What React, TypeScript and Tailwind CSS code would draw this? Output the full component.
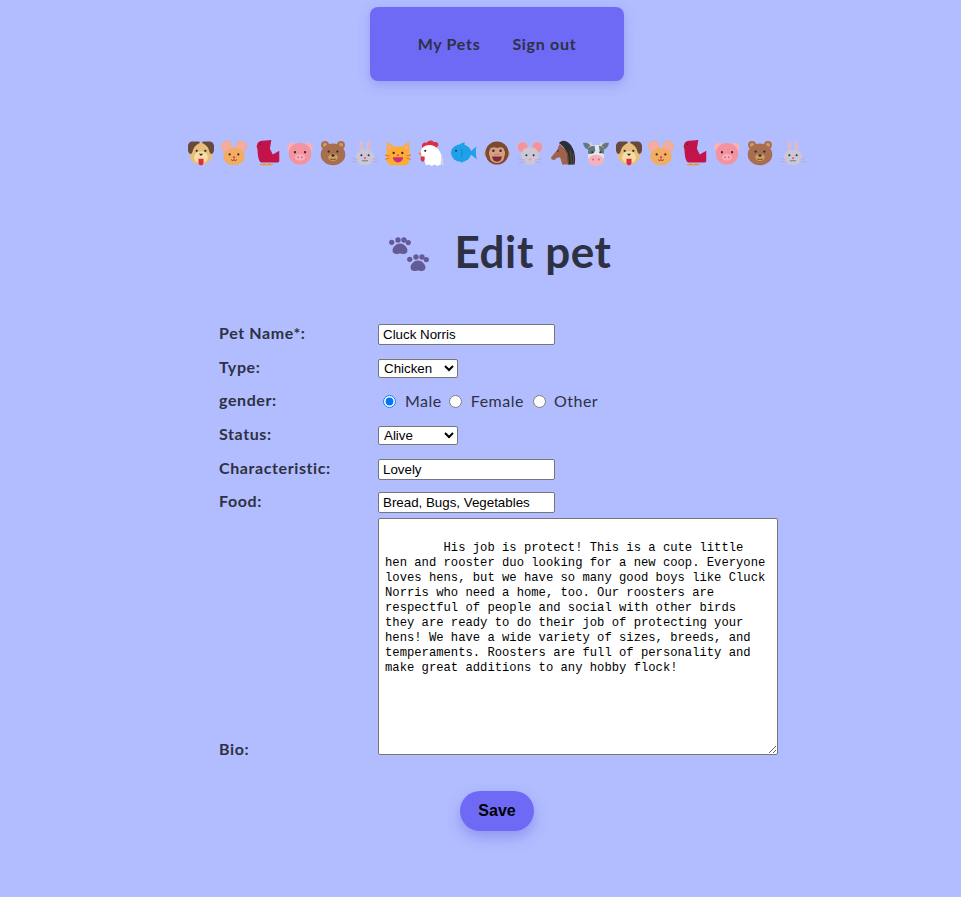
const Dog = () => (
  <svg viewBox="0 0 36 36" className="w-[26px] h-[26px]">
    <ellipse cx="18" cy="19" rx="16" ry="15" fill="#E8BE7C" />
    <path d="M6 2h8c3 0 3 2 1 3-4 2-7 5-8 9-1 4-2 6-4 5-2-1-3-3-3-6V8c0-3 3-6 6-6z" fill="#69493A" />
    <path d="M30 2h-8c-3 0-3 2-1 3 4 2 7 5 8 9 1 4 2 6 4 5 2-1 3-3 3-6V8c0-3-3-6-6-6z" fill="#69493A" />
    <ellipse cx="18" cy="24" rx="9.5" ry="8.500" fill="#F7DEA5" />
    <circle cx="12" cy="15" r="1.6" fill="#292F33" />
    <circle cx="24" cy="15" r="1.6" fill="#292F33" />
    <path d="M15 19h6l-3 3z" fill="#292F33" />
    <path d="M14.500 26h7v5c0 3-2 4-3.500 4s-3.500-1-3.500-4z" fill="#DD2E44" />
  </svg>
);

const Hamster = () => (
  <svg viewBox="0 0 36 36" className="w-[26px] h-[26px]">
    <circle cx="8" cy="9" r="7.5" fill="#F4ABA0" stroke="#F4AC60" strokeWidth="1" />
    <circle cx="28" cy="9" r="7.5" fill="#F4ABA0" stroke="#F4AC60" strokeWidth="1" />
    <ellipse cx="18" cy="23" rx="15" ry="12" fill="#F4AC60" />
    <circle cx="12" cy="20" r="1.5" fill="#292F33" />
    <circle cx="24" cy="20" r="1.5" fill="#292F33" />
    <circle cx="18" cy="24" r="1.500" fill="#DD2E6E" />
    <path d="M14 27c2 2 3 2 4 0 1 2 2 2 4 0" fill="none" stroke="#292F33" strokeWidth="1" />
  </svg>
);

const Bird = () => (
  <svg viewBox="0 0 36 36" className="w-[26px] h-[26px]">
    <path d="M5 7l-3 2.500 4 1.500z" fill="#F4900C" />
    <path d="M4 9C4 3 8 1 12 1l12-1-2 12 4 8 9-5v14c0 1-1 2-2 2H10C7 31 5 22 5 15z" fill="#C2134B" />
    <circle cx="9" cy="6" r="1" fill="#292F33" />
    <path d="M13 31h2v2.500h4V35H8v-1.500h5zM20 31h2v2.500h4V35h-7z" fill="#F4900C" />
  </svg>
);

const Pig = () => (
  <svg viewBox="0 0 36 36" className="w-[26px] h-[26px]">
    <path d="M10 4C5 3 0 6 0 10c0 3 3 6 6 6z" fill="#F7B1BC" />
    <path d="M26 4c5-1 10 2 10 6 0 3-3 6-6 6z" fill="#F7B1BC" />
    <ellipse cx="18" cy="19" rx="15.5" ry="15" fill="#F4929E" />
    <circle cx="11" cy="17" r="1.6" fill="#292F33" />
    <circle cx="25" cy="17" r="1.6" fill="#292F33" />
    <ellipse cx="18" cy="24" rx="7" ry="4.5" fill="#F7B1BC" />
    <ellipse cx="15.5" cy="24" rx="1.2" ry="1.5" fill="#D9657A" />
    <ellipse cx="20.5" cy="24" rx="1.2" ry="1.5" fill="#D9657A" />
  </svg>
);

const Bear = () => (
  <svg viewBox="0 0 36 36" className="w-[26px] h-[26px]">
    <circle cx="7" cy="7" r="5.500" fill="#A86E50" />
    <circle cx="29" cy="7" r="5.500" fill="#A86E50" />
    <circle cx="7" cy="7" r="2.800" fill="#D99E5C" />
    <circle cx="29" cy="7" r="2.800" fill="#D99E5C" />
    <ellipse cx="18" cy="20" rx="17" ry="15" fill="#A86E50" />
    <circle cx="12" cy="16" r="1.6" fill="#292F33" />
    <circle cx="24" cy="16" r="1.6" fill="#292F33" />
    <ellipse cx="18" cy="24" rx="6.500" ry="5" fill="#D99E5C" />
    <ellipse cx="18" cy="21.500" rx="2.500" ry="1.600" fill="#292F33" />
    <path d="M14 26c2 1.500 3 1.500 4 0 1 1.500 2 1.500 4 0" fill="none" stroke="#292F33" strokeWidth="1" />
  </svg>
);

const Rabbit = () => (
  <svg viewBox="0 0 36 36" className="w-[26px] h-[26px]">
    <ellipse cx="13" cy="8" rx="2.500" ry="7" fill="#CCC6D6" />
    <ellipse cx="23" cy="8" rx="2.500" ry="7" fill="#CCC6D6" />
    <ellipse cx="13" cy="8" rx="1.200" ry="5.500" fill="#F4ABBA" />
    <ellipse cx="23" cy="8" rx="1.200" ry="5.500" fill="#F4ABBA" />
    <ellipse cx="18" cy="24" rx="13" ry="11" fill="#CCC6D6" />
    <circle cx="13" cy="21" r="1.400" fill="#292F33" />
    <circle cx="23" cy="21" r="1.400" fill="#292F33" />
    <circle cx="18" cy="25" r="1.200" fill="#DD2E6E" />
    <path d="M14 28c2 2 3 1 4 0 1 1 2 2 4 0" fill="none" stroke="#292F33" strokeWidth="0.800" />
    <path d="M0 25l8 2M0 30h8M35 25l-7 2M36 30h-8" fill="none" stroke="#A5A2B2" strokeWidth="0.700" />
  </svg>
);

const Cat = () => (
  <svg viewBox="0 0 36 36" className="w-[26px] h-[26px]">
    <path d="M3 2l9 7h12l9-7 1 13v12c0 4-3 8-7 8H9c-4 0-7-4-7-8V15z" fill="#FFAC33" />
    <path d="M5 7l4 4-4 3zM31 7l-4 4 4 3z" fill="#F4ABBA" />
    <circle cx="12" cy="18" r="1.6" fill="#292F33" />
    <circle cx="24" cy="18" r="1.6" fill="#292F33" />
    <circle cx="18" cy="21" r="1.2" fill="#DD2E6E" />
    <path d="M11 24h14c0 4-3 7-7 7s-7-3-7-7z" fill="#C92F7E" />
    <path d="M0 21l6 1M0 27l6-2M36 21l-6 1M36 27l-6-2" fill="none" stroke="#E8590C" strokeWidth="1" />
  </svg>
);

const Chicken = () => (
  <svg viewBox="0 0 36 36" className="w-[26px] h-[26px]">
    <path d="M6 11C4 6 8 2 12 4c1-3 8-5 10-1 4-1 7 1 6 5l-6 6z" fill="#DD2E44" />
    <path d="M4 16l-4 3 5 3z" fill="#F4900C" />
    <path d="M4 17c0-6 5-10 12-10 9 0 15 8 17 16 1 4 2 8 2 12l-4-1-4 2-4-2-4 2-4-2-4 1-3-9C5 23 4 20 4 17z" fill="#FFFFFF" />
    <path d="M4 23c-1 4 0 7 2.500 7S10 27 9 23z" fill="#DD2E44" />
    <circle cx="10" cy="15" r="1.500" fill="#292F33" />
    <path d="M32 21c2 5 3 10 3 14l-4-1c1-4 1-9 1-13z" fill="#CCD6DD" />
  </svg>
);

const Fish = () => (
  <svg viewBox="0 0 36 36" className="w-[26px] h-[26px]">
    <path d="M8 10c3-4 6-6 11-7l-1 7z" fill="#1EA0EA" />
    <ellipse cx="14" cy="18" rx="14" ry="12" fill="#1EA0EA" />
    <path d="M25 18l10-9c-1 6-1 13 1 18z" fill="#1EA0EA" />
    <path d="M9 27l7 5 2-5z" fill="#1EA0EA" />
    <circle cx="7" cy="15" r="1.400" fill="#292F33" />
    <path d="M14 12c2 4 2 9 0 12" fill="none" stroke="#1680C4" strokeWidth="1.200" />
  </svg>
);

const Monkey = () => (
  <svg viewBox="0 0 36 36" className="w-[26px] h-[26px]">
    <circle cx="32" cy="19" r="4" fill="#D99E82" />
    <circle cx="4" cy="19" r="4" fill="#D99E82" />
    <circle cx="18" cy="18" r="16" fill="#7C4A2D" />
    <path d="M8 14c0-4 5-5 10-3 5-2 10-1 10 3 2 4 1 7 0 9 0 6-5 9-10 9S8 29 8 23c-1-2-2-5 0-9z" fill="#D99E82" />
    <circle cx="13" cy="15" r="1.700" fill="#292F33" />
    <circle cx="23" cy="15" r="1.700" fill="#292F33" />
    <path d="M16 20h1M19 20h1" stroke="#7C4A2D" strokeWidth="1.200" />
    <path d="M11 23h14c-1 5-3 7-7 7s-6-2-7-7z" fill="#7C2A3C" />
  </svg>
);

const Mouse = () => (
  <svg viewBox="0 0 36 36" className="w-[26px] h-[26px]">
    <circle cx="8" cy="10" r="7.500" fill="#F4929E" stroke="#CCC6D6" strokeWidth="0.800" />
    <circle cx="28" cy="10" r="7.500" fill="#F4929E" stroke="#CCC6D6" strokeWidth="0.800" />
    <path d="M18 34c-7 0-12-6-12-13 0-7 5-11 12-11s12 4 12 11c0 7-5 13-12 13z" fill="#CCC6D6" />
    <circle cx="13" cy="21" r="1.400" fill="#292F33" />
    <circle cx="23" cy="21" r="1.400" fill="#292F33" />
    <ellipse cx="18" cy="27" rx="2" ry="1.500" fill="#F4929E" />
    <path d="M2 26l9 2M2 32l9-2M34 26l-9 2M34 32l-9-2" fill="none" stroke="#A5A2B2" strokeWidth="0.700" />
  </svg>
);

const Horse = () => (
  <svg viewBox="0 0 36 36" className="w-[26px] h-[26px]">
    <path d="M3 27c-2-1-2-3 0-5l7-8 3-8 4 3 10 8 2 17H17l-3-10-5 1c-2 3-4 3-6 2z" fill="#A0624A" />
    <path d="M13 3l5-2c8 0 14 8 16 18 1 6 1 11 0 15h-9l-1-14c-2-7-6-12-11-15z" fill="#292F33" />
    <path d="M24 17l2 17M28 14l2 20M32 18l1 16" stroke="#7A5240" strokeWidth="1" />
    <circle cx="11" cy="15" r="1.200" fill="#292F33" />
  </svg>
);

const Cow = () => (
  <svg viewBox="0 0 36 36" className="w-[26px] h-[26px]">
    <path d="M10 1l3 6h10l3-6 1 8H9z" fill="#DDD3BE" />
    <path d="M0 4c5-1 9 1 11 5l-3 4C4 13 1 9 0 4zM36 4c-5-1-9 1-11 5l3 4c4 0 7-4 8-9z" fill="#66757F" />
    <path d="M7 12c0-3 5-5 11-5s11 2 11 5v14H7z" fill="#E1E8ED" />
    <path d="M7 11c2-2 6-3 9-3l1 7c-2 4-6 5-10 4z" fill="#66757F" />
    <path d="M29 11c-2-2-5-3-7-3l1 7c1 3 3 4 6 4z" fill="#66757F" />
    <circle cx="13" cy="17" r="1.500" fill="#292F33" />
    <circle cx="24" cy="17" r="1.500" fill="#292F33" />
    <ellipse cx="18" cy="28" rx="11" ry="7.500" fill="#F7B1BC" />
    <ellipse cx="14" cy="27" rx="1.300" ry="1.500" fill="#C96A7C" />
    <ellipse cx="22" cy="27" rx="1.300" ry="1.500" fill="#C96A7C" />
  </svg>
);

const Paws = () => (
  <svg viewBox="0 0 42 38" className="w-[42px] h-[38px] mt-[6px]" fill="#635A96">
    <circle cx="4.700" cy="6.300" r="2.600" />
    <circle cx="11" cy="4" r="2.700" />
    <circle cx="17" cy="4" r="2.700" />
    <circle cx="21.300" cy="6.600" r="2.600" />
    <path d="M13 7.500c3.500 0 7.500 3.500 7.500 7 0 2.500-2 3.500-4 3.500-1.500 0-2.500-.5-3.500-.5s-2 .5-3.500.5c-2 0-4-1-4-3.500 0-3.500 4-7 7.500-7z" />
    <circle cx="22.700" cy="23.300" r="2.600" />
    <circle cx="29" cy="21" r="2.700" />
    <circle cx="35" cy="21" r="2.700" />
    <circle cx="39.300" cy="23.600" r="2.600" />
    <path d="M31 24.500c3.500 0 7.500 3.500 7.500 7 0 2.500-2 3.500-4 3.500-1.500 0-2.500-.5-3.500-.5s-2 .5-3.500.5c-2 0-4-1-4-3.500 0-3.500 4-7 7.500-7z" />
  </svg>
);

const animals = [Dog, Hamster, Bird, Pig, Bear, Rabbit, Cat, Chicken, Fish, Monkey, Mouse, Horse, Cow, Dog, Hamster, Bird, Pig, Bear, Rabbit];

const bio =
  "\n        His job is protect! This is a cute little hen and rooster duo looking for a new coop. Everyone loves hens, but we have so many good boys like Cluck Norris who need a home, too. Our roosters are respectful of people and social with other birds they are ready to do their job of protecting your hens! We have a wide variety of sizes, breeds, and temperaments. Roosters are full of personality and make great additions to any hobby flock!";

const fieldClass =
  "border border-[#767676] rounded-[2px] bg-white text-black font-['Liberation_Sans',sans-serif] text-[13.33px]";
const labelClass = "w-[159px] pb-[4px] font-bold text-[16px] tracking-[0.6px]";

const App = () => {
  return (
    <div className="min-h-screen bg-[#B2BDFF] pl-[33px] pt-[7px] flex flex-col items-center text-[#2D3142] font-['Lato',sans-serif]">
      <nav className="w-[254px] h-[74px] rounded-lg bg-[#6F6AF6] shadow-[0_4px_12px_rgba(90,90,220,0.3)] flex items-center justify-center gap-[32px] font-bold text-[16px] tracking-[0.7px]">
        <span>My Pets</span>
        <span>Sign out</span>
      </nav>

      <div className="mt-[55px] h-[33px] flex items-center">
        {animals.map((Animal, i) => (
          <div key={i} className="w-[32.9px] flex justify-center">
            <Animal />
          </div>
        ))}
      </div>

      <div className="mt-[53px] ml-[5px] h-[60px] flex items-center gap-[25px]">
        <Paws />
        <h1 className="pb-[2px] font-bold text-[44px] tracking-[0.6px]">Edit pet</h1>
      </div>

      <form className="mt-[42px] ml-[3px] w-[559px] flex flex-col">
        <div className="flex items-center h-[21px]">
          <label className={labelClass}>Pet Name*:</label>
          <input defaultValue="Cluck Norris" className={`${fieldClass} w-[177px] h-[21px] px-[4px]`} />
        </div>
        <div className="flex items-center h-[21px] mt-[13px]">
          <label className={labelClass}>Type:</label>
          <select defaultValue="Chicken" className={`${fieldClass} w-[80px] h-[19px] pl-[1px]`}>
            <option>Chicken</option>
          </select>
        </div>
        <div className="flex items-center h-[21px] mt-[12px] text-[16px] tracking-[0.5px]">
          <label className={labelClass}>gender:</label>
          <input type="radio" name="gender" defaultChecked className="ml-[5px] w-[13px] h-[13px]" />
          <span className="ml-[9px] pb-[2px]">Male</span>
          <input type="radio" name="gender" className="ml-[7px] w-[13px] h-[13px]" />
          <span className="ml-[9px] pb-[2px]">Female</span>
          <input type="radio" name="gender" className="ml-[9px] w-[13px] h-[13px]" />
          <span className="ml-[8px] pb-[2px]">Other</span>
        </div>
        <div className="flex items-center h-[21px] mt-[13px]">
          <label className={labelClass}>Status:</label>
          <select defaultValue="Alive" className={`${fieldClass} w-[80px] h-[19px] pl-[1px]`}>
            <option>Alive</option>
          </select>
        </div>
        <div className="flex items-center h-[21px] mt-[13px]">
          <label className={labelClass}>Characteristic:</label>
          <input defaultValue="Lovely" className={`${fieldClass} w-[177px] h-[21px] px-[4px]`} />
        </div>
        <div className="flex items-center h-[21px] mt-[12px]">
          <label className={labelClass}>Food:</label>
          <input defaultValue="Bread, Bugs, Vegetables" className={`${fieldClass} w-[177px] h-[21px] px-[4px]`} />
        </div>
        <div className="flex items-end mt-[5px]">
          <label className="w-[159px] font-bold text-[16px] tracking-[0.6px] leading-[12px]">Bio:</label>
          <textarea
            defaultValue={bio}
            className="w-[400px] h-[237px] border border-[#767676] rounded-[2px] bg-white text-black px-[6px] py-[7px] font-['Liberation_Mono',monospace] text-[12.2px] leading-[15px]"
          />
        </div>
      </form>

      <button className="mt-[36px] w-[74px] h-[40px] rounded-full bg-[#6F6AF6] text-black font-['Liberation_Sans',sans-serif] font-bold text-[16px] shadow-[0_6px_14px_rgba(90,90,220,0.4)]">
        Save
      </button>
    </div>
  );
};

export default App;
